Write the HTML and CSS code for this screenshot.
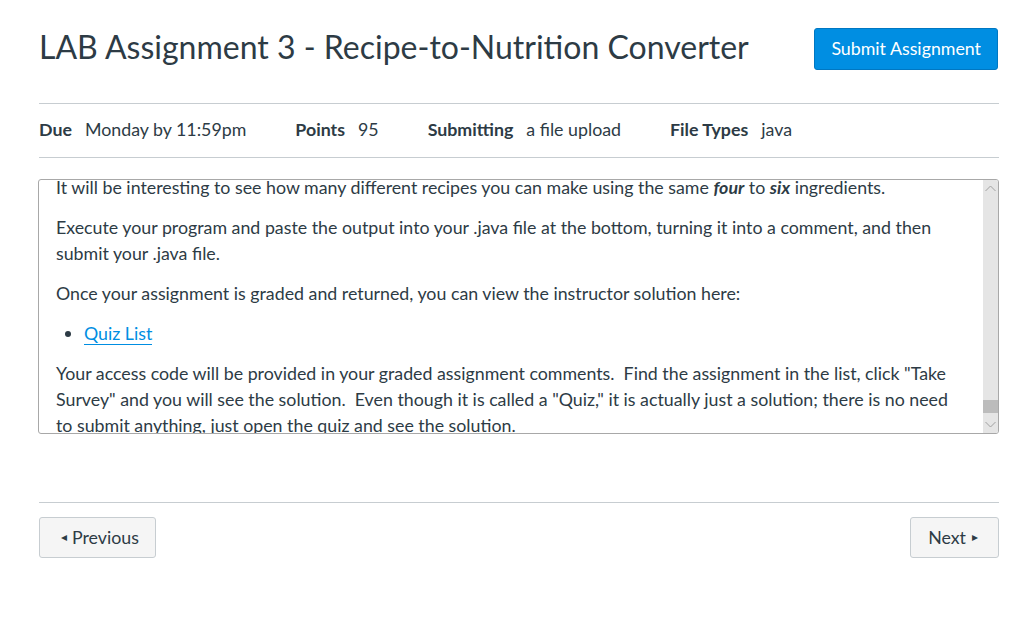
FILE: index.html
```html
<!DOCTYPE html>
<html>
<head>
<meta charset="utf-8">
<link rel="stylesheet" href="styles.css">
</head>
<body>
<div class="page">
  <header class="head">
    <h1 class="title">LAB Assignment 3 - Recipe-to-Nutrition Converter</h1>
    <button class="btn-primary">Submit Assignment</button>
  </header>
  <div class="details">
    <span class="item"><b>Due</b><span>Monday by 11:59pm</span></span>
    <span class="item"><b>Points</b><span>95</span></span>
    <span class="item"><b>Submitting</b><span>a file upload</span></span>
    <span class="item"><b>File Types</b><span>java</span></span>
  </div>
  <div class="frame">
    <div class="viewport">
      <div class="content">
        <p>It will be interesting to see how many different recipes you can make using the same <b><i>four</i></b> to <b><i>six</i></b> ingredients.</p>
        <p>Execute your program and paste the output into your .java file at the bottom, turning it into a comment, and then submit your .java file.</p>
        <p>Once your assignment is graded and returned, you can view the instructor solution here:</p>
        <ul><li><a href="#">Quiz List</a></li></ul>
        <p>Your access code will be provided in your graded assignment comments.&nbsp; Find the assignment in the list, click "Take Survey" and you will see the solution.&nbsp; Even though it is called a "Quiz," it is actually just a solution; there is no need to submit anything, just open the quiz and see the solution.</p>
      </div>
    </div>
    <div class="scrollbar">
      <div class="arrow up"><svg width="11" height="7" viewBox="0 0 11 7"><path d="M0.5 6 L5.5 1 L10.5 6" fill="none" stroke="#a0a0a0" stroke-width="1"/></svg></div>
      <div class="track"><div class="thumb"></div></div>
      <div class="arrow down"><svg width="11" height="7" viewBox="0 0 11 7"><path d="M0.5 1 L5.5 6 L10.5 1" fill="none" stroke="#a0a0a0" stroke-width="1"/></svg></div>
    </div>
  </div>
  <div class="footer">
    <button class="btn prev"><span class="tri">◂</span>Previous</button>
    <button class="btn next">Next<span class="tri">▸</span></button>
  </div>
</div>
</body>
</html>
```
FILE: styles.css
```css
html, body { margin: 0; padding: 0; background: #fff; }
body { font-family: Lato, "Open Sans", sans-serif; color: #2D3B45; }
.page { width: 960px; margin-left: 39px; }
.head { display: flex; justify-content: space-between; align-items: flex-start; padding-top: 28px; padding-bottom: 33px; border-bottom: 1px solid #C7CDD1; }
.title { margin: 0; font-size: 32px; font-weight: 400; line-height: 40px; margin-top: -1px; }
.btn-primary { margin-right: 1px; height: 42px; padding: 0 16px 2px; background: #008EE2; color: #fff; border: 1px solid #0077C2; border-radius: 3px; font-family: Lato, sans-serif; font-size: 17.8px; }
.details { display: flex; height: 53px; align-items: center; border-bottom: 1px solid #C7CDD1; font-size: 17.8px; }
.details .item { margin-right: 49px; margin-top: -3px; }
.item b { font-weight: 700; margin-right: 13px; }
.frame { margin-top: 21px; height: 253px; margin-left: -1px; border: 1px solid #a8a8a8; border-radius: 3px; display: flex; overflow: hidden; }
.viewport { flex: 1; overflow: hidden; }
.content { padding: 0 17px 0 17px; margin-top: -6px; font-size: 17.8px; line-height: 26px; }
.content p { margin: 0 0 14px; }
.content ul { margin: 0 0 14px; padding-left: 28px; }
.content a { color: #008EE2; text-decoration: none; border-bottom: 1px solid #008EE2; }
.scrollbar { width: 15px; background: #e5e5e5; display: flex; flex-direction: column; }
.arrow { height: 17px; display: flex; align-items: center; justify-content: center; }
.track { flex: 1; position: relative; }
.thumb { position: absolute; left: 0; right: 0; bottom: 3px; height: 13px; background: #bcbcbc; }
.footer { margin-top: 68px; border-top: 1px solid #C7CDD1; padding-top: 14px; display: flex; justify-content: space-between; }
.btn { height: 41px; padding: 0 15px 2px; background: #F5F5F5; border: 1px solid #C7CDD1; border-radius: 3px; color: #2D3B45; font-family: Lato, sans-serif; font-size: 17.8px; display: flex; align-items: center; }
.btn.prev { padding-left: 21px; padding-right: 16px; }
.btn.next { padding-left: 17px; padding-right: 20px; }
.prev .tri { margin-right: 5px; }
.next .tri { margin-left: 6px; }
.tri { font-size: 12px; color: #2D3B45; }
```
